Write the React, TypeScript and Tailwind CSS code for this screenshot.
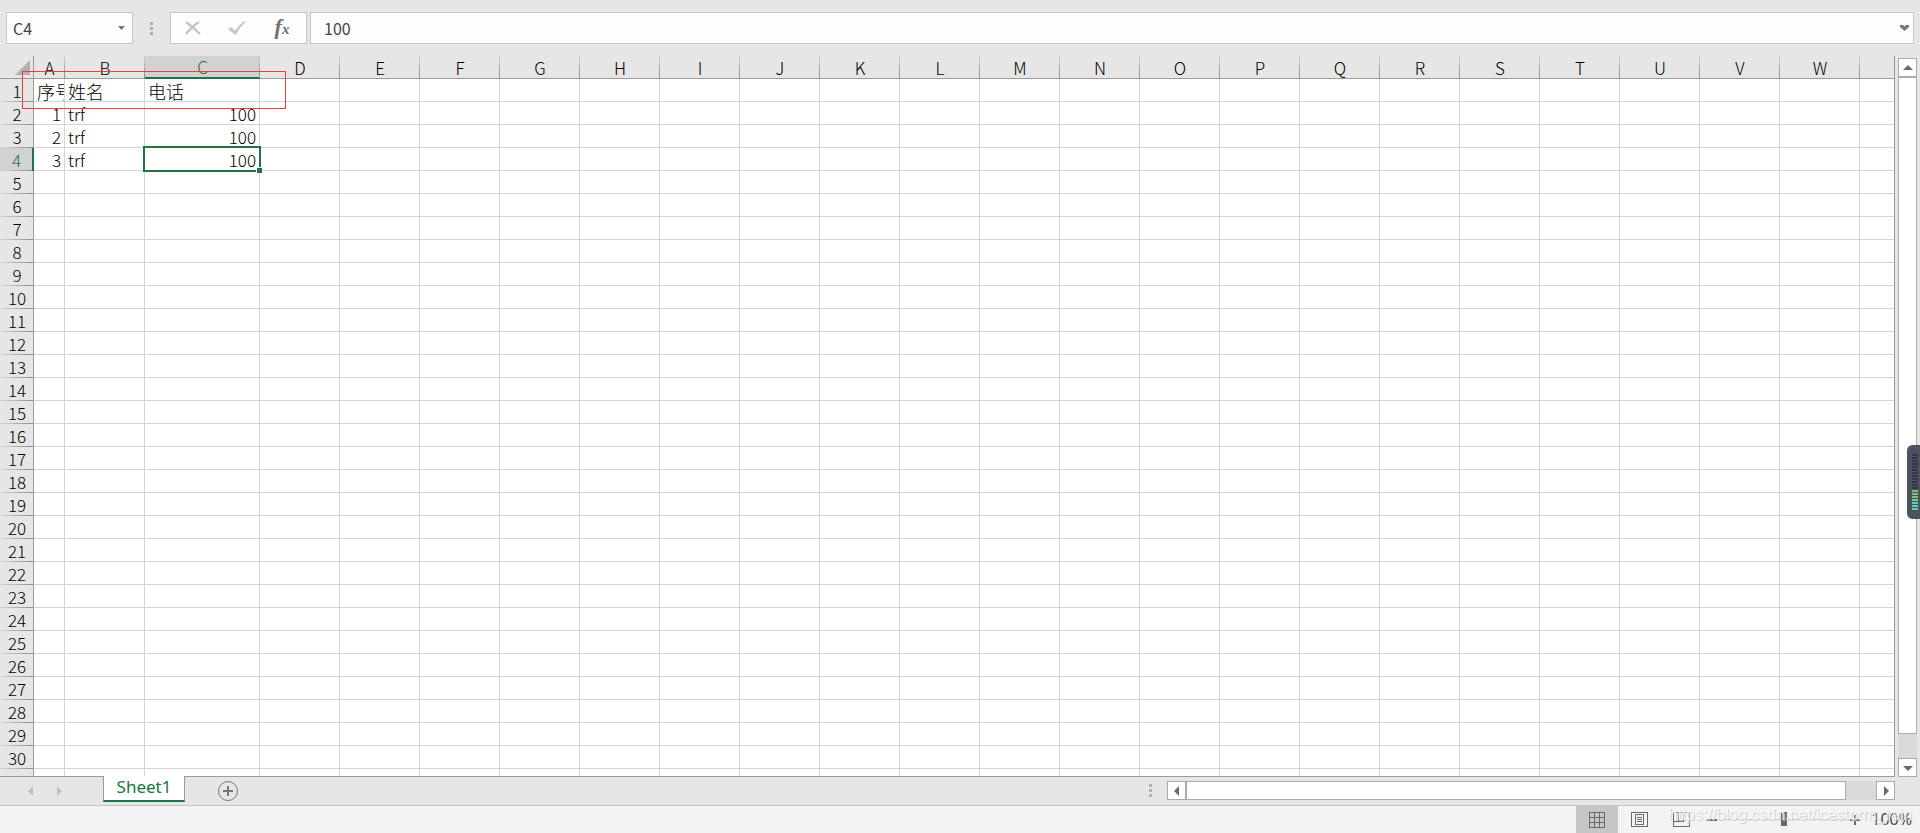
import { useState } from 'react';

const COLUMNS = [
  { name: 'A', width: 'w-[31px]' },
  { name: 'B', width: 'w-20' },
  { name: 'C', width: 'w-[115px]' },
  ...'DEFGHIJKLMNOPQRSTUVW'.split('').map((name) => ({ name, width: 'w-20' })),
];

const ROWS = Array.from({ length: 31 }, (_, i) => i + 1);

const CELLS: Record<string, string | number> = {
  A1: '序号', B1: '姓名', C1: '电话',
  A2: 1, B2: 'trf', C2: 100,
  A3: 2, B3: 'trf', C3: 100,
  A4: 3, B4: 'trf', C4: 100,
};

const Dots = () => (
  <svg className="w-[3px] h-[13px] text-[#b0b0b0]" viewBox="0 0 3 13" fill="currentColor" shapeRendering="crispEdges">
    <path d="M0 0h3v3H0zM0 5h3v3H0zM0 10h3v3H0z" />
  </svg>
);

function FormulaBar({ cell }: { cell: string }) {
  return (
    <div className="shrink-0 flex h-14 pt-3 pl-[6px] pr-[6px] text-[16px] text-[#444] font-['Noto_Sans_CJK_SC',sans-serif]">
      <div className="relative w-[127px] h-8">
        <input aria-label="Name Box" value={cell} readOnly className="w-full h-full border border-[#c6c6c6] bg-[#fdfdfd] px-[6px] outline-none" />
        <button aria-label="Open name list" className="absolute right-0 top-0 w-6 h-8 flex items-center justify-center">
          <svg className="w-[7px] h-1" viewBox="0 0 7 4" fill="#777"><path d="M0 0h7L3.500 4z" /></svg>
        </button>
      </div>
      <div className="w-[37px] h-8 flex items-center justify-center"><Dots /></div>
      <div className="w-[137px] h-8 flex items-center justify-between border border-[#c6c6c6] bg-[#fdfdfd] px-[14px]">
        <button aria-label="Cancel">
          <svg className="w-4 h-[14px]" viewBox="0 0 16 14" fill="none" stroke="#c3c3c3" strokeWidth="2.200"><path d="M1 1c4 3 9 7 14 12M14 1C9 4 5 8 1 13" /></svg>
        </button>
        <button aria-label="Enter">
          <svg className="w-[18px] h-[14px]" viewBox="0 0 18 14" fill="#c6c6c6"><path d="M0 8l3-2 4 3.500Q11 4 16 0l1.500 1Q11 7 7.500 14z" /></svg>
        </button>
        <button aria-label="Insert Function" className="w-5 h-8 text-[22px] leading-[26px] italic font-bold text-[#6f6f6f] font-['Liberation_Serif',serif]">
          f<span className="text-[15px]">x</span>
        </button>
      </div>
      <div className="relative flex-1 h-8 ml-[3px]">
        <input aria-label="Formula Bar" value={CELLS[cell] ?? ''} readOnly className="w-full h-full border border-[#c6c6c6] bg-[#fdfdfd] px-[13px] outline-none" />
        <button aria-label="Expand Formula Bar" className="absolute right-0 top-0 w-5 h-8 flex items-center justify-center">
          <svg className="w-[9px] h-[6px]" viewBox="0 0 9 6" fill="#777"><path d="M0 0h3l1.500 1.500L6 0h3v2L4.500 6 0 2z" /></svg>
        </button>
      </div>
    </div>
  );
}

function Grid({ active, onSelect }: { active: string; onSelect: (cell: string) => void }) {
  const activeColumn = active.slice(0, 1);
  const activeRow = Number(active.slice(1));

  return (
    <div className="relative flex-1 min-w-0 overflow-hidden border-r border-b border-[#9b9b9b]">
      <table className="w-full table-fixed border-separate border-spacing-0 text-[17px] leading-[22px] font-light text-black font-['Noto_Sans_CJK_SC',sans-serif]">
        <colgroup>
          <col className="w-[34px]" />
          {COLUMNS.map((c) => <col key={c.name} className={c.width} />)}
          <col />
        </colgroup>
        <thead>
          <tr className="h-[23px]">
            <th className="relative p-0 bg-[#e6e6e6] border-b border-r border-[#9b9b9b]">
              <svg className="absolute right-[3px] bottom-[3px] w-[15px] h-[15px]" viewBox="0 0 15 15" fill="#b2b2b2"><path d="M15 0v15H0z" /></svg>
            </th>
            {COLUMNS.map((c) => (
              <th
                key={c.name}
                scope="col"
                className={`relative p-0 h-[23px] font-light ${c.name === activeColumn ? 'bg-[#d2d2d2] text-[#217346] border-b-2 border-[#217346]' : 'bg-[#e6e6e6] border-b border-[#9b9b9b]'}`}
              >
                <div className="h-[21px]">{c.name}</div>
                <span className="absolute right-0 top-0 w-px h-[22px] bg-gradient-to-b from-[#cfcfcf] to-[#8f8f8f]" />
              </th>
            ))}
            <th className="p-0 bg-[#e6e6e6] border-b border-[#9b9b9b]" />
          </tr>
        </thead>
        <tbody className="leading-6">
          {ROWS.map((row) => (
            <tr key={row} className="h-[23px]">
              <th
                scope="row"
                className={`relative p-0 h-[23px] font-light ${row === activeRow ? 'bg-[#d2d2d2] text-[#217346] border-r-2 border-r-[#217346]' : 'bg-[#e6e6e6] border-r border-r-[#9b9b9b]'}`}
              >
                <div className="h-[23px] pl-px">{row}</div>
                <span className="absolute left-0 bottom-0 w-full h-px bg-gradient-to-r from-[#d4d4d4] to-[#8f8f8f]" />
              </th>
              {COLUMNS.map((c) => {
                const id = c.name + row;
                const value = CELLS[id];
                return (
                  <td
                    key={id}
                    onClick={() => onSelect(id)}
                    className={`relative p-0 h-[23px] bg-white border-r border-b border-[#d4d4d4] ${id === active ? 'z-10' : ''}`}
                  >
                    <div className={`h-[22px] px-[3px] overflow-hidden whitespace-nowrap ${typeof value === 'number' ? 'text-right' : ''} ${row === 1 ? 'text-[18px]' : ''}`}>{value}</div>
                    {id === active && (
                      <span className="absolute -inset-[2px] border-2 border-[#217346] pointer-events-none">
                        <span className="absolute -right-[3px] -bottom-[3px] w-[6px] h-[6px] bg-[#217346] border-l border-t border-white" />
                      </span>
                    )}
                  </td>
                );
              })}
              <td className="p-0 bg-white border-b border-[#d4d4d4]" />
            </tr>
          ))}
        </tbody>
      </table>
      {/* annotation over the header row */}
      <div className="absolute z-20 left-[22px] top-[15px] w-[264px] h-[38px] border border-[#f43b3b] pointer-events-none" />
    </div>
  );
}

const arrows = {
  up: 'M0 7l5-5 5 5z',
  down: 'M0 3l5 5 5-5z',
  left: 'M7 0L2 5l5 5z',
  right: 'M3 0l5 5-5 5z',
};

function ScrollButton({ dir }: { dir: keyof typeof arrows }) {
  return (
    <button aria-label={`Scroll ${dir}`} className="shrink-0 w-[19px] h-[19px] flex items-center justify-center bg-white border border-[#ababab]">
      <svg className="w-[10px] h-[10px]" viewBox="0 0 10 10" fill="#6b6b6b"><path d={arrows[dir]} /></svg>
    </button>
  );
}

function SheetBar() {
  return (
    <div className="shrink-0 h-[29px] flex items-start border-b border-[#c6c6c6]">
      <div className="w-[103px] h-full flex items-center pl-7 gap-6 text-[#c0c0c0]">
        <button aria-label="Previous sheet"><svg className="w-[5px] h-[10px]" viewBox="0 0 5 10" fill="currentColor"><path d="M5 0v10L0 5z" /></svg></button>
        <button aria-label="Next sheet"><svg className="w-[5px] h-[10px]" viewBox="0 0 5 10" fill="currentColor"><path d="M0 0v10l5-5z" /></svg></button>
      </div>
      <button className="relative z-10 -mt-px w-[82px] h-[26px] bg-white border-x border-x-[#9b9b9b] border-b-2 border-b-[#217346] text-[17px] leading-[22px] pb-[2px] text-[#217346] font-['Noto_Sans',sans-serif]">
        Sheet1
      </button>
      <button aria-label="New sheet" className="ml-[33px] mt-1">
        <svg className="w-5 h-5" viewBox="0 0 20 20" fill="none" stroke="#777"><circle cx="10" cy="10" r="9.500" /><path strokeWidth="2" d="M10 5v10M5 10h10" /></svg>
      </button>
      <div className="flex-1" />
      <div className="pt-[7px] pr-[15px]"><Dots /></div>
      <div className="w-[728px] h-[19px] mt-1 mr-[25px] flex bg-[#dadada]">
        <ScrollButton dir="left" />
        <div className="flex-1 mr-[30px] bg-white border border-[#ababab]" />
        <ScrollButton dir="right" />
      </div>
    </div>
  );
}

function StatusBar() {
  return (
    <div className="relative shrink-0 h-[27px] flex justify-end bg-[#f3f3f3] text-[#6b6b6b]">
      <button aria-label="Normal view" className="w-[42px] h-full flex items-center justify-center bg-[#c6c6c6]">
        <svg className="w-4 h-4" viewBox="0 0 16 16" fill="none" stroke="currentColor" shapeRendering="crispEdges"><path d="M.5.5h15v15H.5zM5.500 0v16M10.500 0v16M0 5.500h16M0 10.500h16" /></svg>
      </button>
      <button aria-label="Page layout view" className="w-[42px] h-full flex items-center justify-center">
        <svg className="w-[17px] h-[15px]" viewBox="0 0 17 15" fill="none" stroke="currentColor" shapeRendering="crispEdges"><path d="M.5.5h16v14H.5zM4.500 2.500h8v10h-8zM6 5.500h5M6 7.500h5M6 9.500h5" /></svg>
      </button>
      <button aria-label="Page break view" className="w-[42px] h-full flex items-center justify-center">
        <svg className="w-[17px] h-[15px]" viewBox="0 0 17 15" fill="none" stroke="currentColor" shapeRendering="crispEdges"><path d="M.5.5h16v14H.5zM5.500 0v9M10.500 0v9M0 9.500h11" /></svg>
      </button>
      <button aria-label="Zoom out" className="w-[10px] ml-[5px] flex items-center"><span className="w-[10px] h-[2px] bg-[#6b6b6b]" /></button>
      <div className="relative w-[133px] flex items-center">
        <div className="w-full h-px bg-[#c0c0c0]" />
        <input type="range" aria-label="Zoom" min={10} max={190} defaultValue={100} className="absolute inset-0 w-full h-full opacity-0" />
        <span className="absolute left-16 top-[6px] w-[6px] h-[14px] bg-[#6b6b6b] pointer-events-none" />
      </div>
      <button aria-label="Zoom in" className="w-[10px] flex items-center">
        <svg className="w-[10px] h-[10px]" viewBox="0 0 10 10" stroke="currentColor" strokeWidth="2"><path d="M5 0v10M0 5h10" /></svg>
      </button>
      <button className="w-[60px] pr-2 text-right text-[16px] leading-[27px] text-[#444] font-['Noto_Sans',sans-serif]">100%</button>
      <span className="absolute right-2 top-0 text-[16px] leading-[18px] text-white/70 whitespace-nowrap pointer-events-none [text-shadow:1px_1px_1px_#ccc] font-['Liberation_Sans',sans-serif]">
        https://blog.csdn.net/icestorm_rain
      </span>
    </div>
  );
}

export default function App() {
  const [active, setActive] = useState('C4');

  return (
    <div className="relative h-screen flex flex-col overflow-hidden bg-[#e6e6e6]">
      <FormulaBar cell={active} />
      <div className="flex-1 min-h-0 flex">
        <Grid active={active} onSelect={setActive} />
        <div className="w-[19px] mt-[2px] ml-[3px] mr-[3px] flex flex-col bg-[#dadada]">
          <ScrollButton dir="up" />
          <div className="flex-1 mb-6 bg-white border border-[#ababab]" />
          <ScrollButton dir="down" />
        </div>
      </div>
      <SheetBar />
      <StatusBar />
      {/* level meter docked on the screen edge */}
      <svg className="absolute right-0 top-[445px] w-[13px] h-[74px]" viewBox="0 0 13 74">
        <path d="M13 0H5Q0 1 0 6v62q0 5 5 6h8z" fill="#4c5260" />
        {Array.from({ length: 19 }, (_, i) => (
          <path key={i} d={`M5 ${10 + i * 3}h6`} stroke={i < 12 ? '#343946' : i < 15 ? '#7fc06c' : '#62cfb0'} strokeWidth="2" />
        ))}
      </svg>
    </div>
  );
}
